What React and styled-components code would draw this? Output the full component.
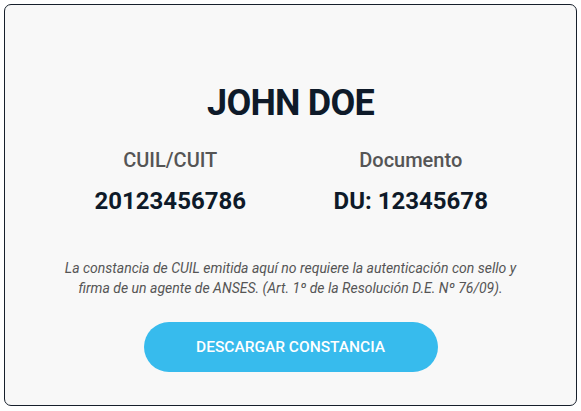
import React from "react";
import styled, { createGlobalStyle } from "styled-components";

const GlobalStyle = createGlobalStyle`
  body {
    margin: 0;
    background: #ffffff;
    font-family: Roboto, "Liberation Sans", sans-serif;
  }
`;

const App = () => {
  const data = [
    { label: "CUIL/CUIT", value: "20123456786" },
    { label: "Documento", value: "DU: 12345678" },
  ];

  return (
    <>
      <GlobalStyle />
      <Page>
        <Card>
          <Name>JOHN DOE</Name>
          <InfoRow>
            {data.map((item) => (
              <InfoCol key={item.label}>
                <InfoLabel>{item.label}</InfoLabel>
                <InfoValue>{item.value}</InfoValue>
              </InfoCol>
            ))}
          </InfoRow>
          <Note>
            La constancia de CUIL emitida aquí no requiere la autenticación con
            sello y firma de un agente de ANSES. (Art. 1º de la Resolución D.E.
            Nº 76/09).
          </Note>
          <DownloadBtn>DESCARGAR CONSTANCIA</DownloadBtn>
        </Card>
      </Page>
    </>
  );
};

export default App;

const Page = styled.div`
  padding: 4px 4px 5px 4px;
`;

const Card = styled.div`
  box-sizing: border-box;
  width: 573px;
  height: 402px;
  border: 1px solid #17202c;
  border-radius: 7px;
  background-color: #f8f8f8;
  padding: 76px 45px 0;
  display: flex;
  flex-direction: column;
  align-items: center;
`;

const Name = styled.h1`
  margin: 0;
  font-size: 36px;
  font-weight: 700;
  letter-spacing: -0.8px;
  line-height: 44px;
  color: #0e1a29;
`;

const InfoRow = styled.div`
  width: 100%;
  display: grid;
  grid-template-columns: 1fr 1fr;
  margin-top: 22px;
`;

const InfoCol = styled.div`
  display: flex;
  flex-direction: column;
  align-items: center;
`;

const InfoLabel = styled.div`
  font-size: 20px;
  font-weight: 500;
  line-height: 26px;
  color: #555555;
`;

const InfoValue = styled.div`
  margin-top: 13px;
  font-size: 24px;
  font-weight: 700;
  line-height: 30px;
  color: #0e1a29;
`;

const Note = styled.p`
  margin: 42px 0 0;
  width: 470px;
  text-align: center;
  font-size: 14px;
  font-style: italic;
  line-height: 20px;
  color: #555555;
`;

const DownloadBtn = styled.button`
  margin-top: 24px;
  width: 294px;
  height: 50px;
  border: none;
  border-radius: 25px;
  background-color: #37bbed;
  color: #ffffff;
  font-family: Roboto, "Liberation Sans", sans-serif;
  font-size: 15.5px;
  font-weight: 500;
  cursor: pointer;
`;
